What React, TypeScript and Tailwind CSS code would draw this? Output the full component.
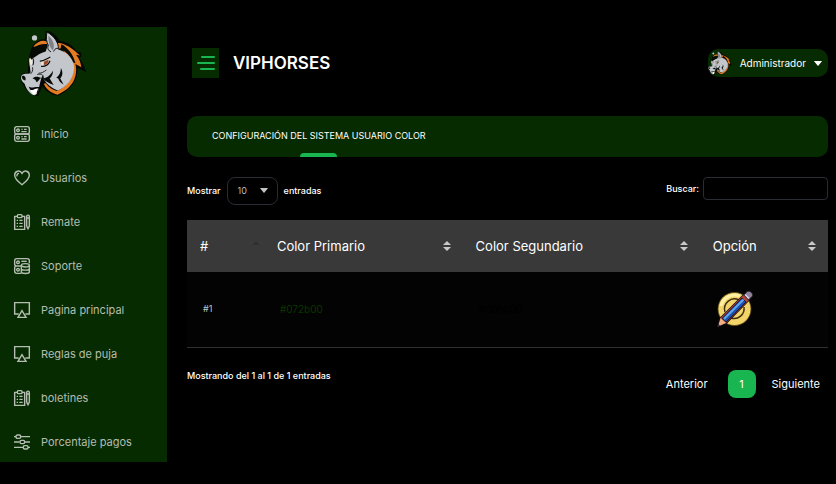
import { useState } from "react"
import type { ReactNode } from "react"

const menu = [
    { label: "Inicio", icon: "server" },
    { label: "Usuarios", icon: "heart" },
    { label: "Remate", icon: "clipboard" },
    { label: "Soporte", icon: "database" },
    { label: "Pagina principal", icon: "screen" },
    { label: "Reglas de puja", icon: "screen" },
    { label: "boletines", icon: "clipboard" },
    { label: "Porcentaje pagos", icon: "sliders" },
]

const icons: Record<string, ReactNode> = {
    server: (
        <>
            <rect x="1" y="1" width="22" height="11" rx="3" />
            <rect x="1" y="12" width="22" height="11" rx="3" />
            <circle cx="6" cy="6.5" r="2" />
            <circle cx="6" cy="17.5" r="2" />
            <path d="M11 5h2M15 5h4M11 8.500h8M11 16h2M15 16h4M11 19.500h8" />
        </>
    ),
    heart: (
        <>
            <path d="M12 22C8 19 1 14 1 8c0-7 8-8.500 11-3 3-5.500 11-4 11 3 0 6-7 11-11 14z" />
            <path d="M4.500 9.500C4 7 5.500 5 7.500 5" />
        </>
    ),
    clipboard: (
        <>
            <path d="M5 3.500H1V23h15V3.500h-4" />
            <rect x="5" y="1" width="7" height="4.500" rx="1.500" />
            <path d="M4 9.500h2M8 9.500h5M4 14h2M8 14h5M4 18.500h2M8 18.500h5" />
            <path d="M19 4c0-3 4-3 4 0v14l-2 4-2-4zM19 6h4" />
        </>
    ),
    database: (
        <>
            <path d="M23 8V4c0-2-1-3-3-3H4C2 1 1 2 1 4v5c0 2 1 3 3 3h7M4 12c-2 0-3 1-3 3v5c0 2 1 3 3 3h7" />
            <circle cx="6" cy="6.500" r="2" />
            <circle cx="6" cy="17.500" r="2" />
            <path d="M11 5h8" />
            <ellipse cx="17" cy="11" rx="6" ry="2.500" />
            <path d="M11 11v10c0 3 12 3 12 0V11M11 16c0 3 12 3 12 0" />
        </>
    ),
    screen: <path d="M7 18H1V1h22v17h-6M12 13l6 10H6z" />,
    sliders: (
        <>
            <path d="M0 4h3M10 4h14M0 12h8M16 12h8M0 20h14M21 20h3" />
            <rect x="3" y="1.500" width="7" height="5" rx="2" />
            <rect x="9" y="9.500" width="7" height="5" rx="2" />
            <rect x="14" y="17.500" width="7" height="5" rx="2" />
        </>
    ),
}

function MenuIcon({ name }: { name: string }) {
    return (
        <svg viewBox="0 0 24 24" className="size-4 shrink-0 overflow-visible" fill="none" stroke="currentColor" strokeWidth="2.100" aria-hidden="true">
            {icons[name]}
        </svg>
    )
}

function Horse({ className }: { className: string }) {
    return (
        <svg viewBox="26 18 200 200" className={className} role="img" aria-label="VIPHORSES">
            {/* outline and mane */}
            <path d="M60 72C70 52 84 42 102 42L104 18L112 17C132 26 142 40 146 48C164 50 182 56 198 80L212 84L212 96L206 98C214 112 222 124 226 142L200 130C202 162 186 194 140 215C120 210 104 200 94 186L80 216L58 208C44 198 34 180 28 164C26 148 38 144 50 146L52 102Z" fill="#050805" />
            <path d="M66 66C82 44 104 44 112 54L146 54C172 60 188 74 208 92L196 90C206 102 210 114 212 128L194 118C202 154 188 190 140 211C120 206 106 196 98 178L104 176C114 190 126 196 138 200C176 184 192 150 184 112L152 72L92 64Z" fill="#e57c22" />
            <path d="M112 58C92 56 80 60 66 70C60 78 58 88 58 98L74 88L72 96L94 84L114 80Z" fill="#070b06" />
            <path d="M152 58C172 70 188 90 194 116L184 112C178 92 166 80 148 74Z" fill="#070b06" />
            {/* head and neck */}
            <path d="M66 100C78 92 88 84 104 80L110 62C105 48 103 36 108 21C130 34 144 54 142 74C170 82 190 104 190 130C188 162 168 188 140 198C122 192 108 180 98 164L94 152C88 166 86 180 82 196C80 208 74 214 66 212C54 208 44 192 40 178C28 168 26 156 34 150C46 144 50 152 58 144L56 126C52 116 58 106 66 100Z" fill="#c3c6cb" />
            <path d="M112 32C128 48 132 62 126 76C116 70 112 56 112 32Z" fill="#7d8288" />
            <path d="M108 21C104 38 106 50 112 62C108 70 112 78 120 81M108 21C130 34 144 54 142 72C136 68 130 74 128 80" fill="none" stroke="#080b08" strokeWidth="3" />
            {/* eyes */}
            <path d="M90 112C100 112 108 106 116 102C114 114 106 122 92 123Z" fill="#f4e7d4" />
            <path d="M98 111L113 104C112 116 106 121 98 121Z" fill="#9a4a2c" />
            <path d="M86 109C98 110 108 102 118 97M90 125C104 126 113 119 117 108" fill="none" stroke="#080b08" strokeWidth="3.500" />
            <path d="M56 98C64 106 65 114 60 123C53 116 52 106 56 98Z" fill="#f3ead8" />
            <path d="M62 96C68 104 69 112 65 122" fill="none" stroke="#080b08" strokeWidth="3" />
            {/* muzzle */}
            <path d="M106 136C98 142 92 146 82 146M78 150C92 146 100 152 96 164M64 128C66 138 62 144 58 148" fill="none" stroke="#080b08" strokeWidth="2.500" />
            <path d="M64 162C70 154 84 156 90 161C84 162 84 170 76 173C74 167 71 164 64 162Z" fill="#080b08" />
            <path d="M32 155C38 150 46 158 42 168C36 167 31 163 32 155Z" fill="#080b08" />
            <path d="M52 186C62 193 70 186 84 188L80 206L62 207Z" fill="#080b08" />
            <path d="M56 196C66 200 70 191 81 192L76 207C68 215 60 208 56 196Z" fill="#fff" />
            {/* neck shading */}
            <path d="M96 162C110 160 120 150 126 138C126 150 122 156 116 162L128 182C114 176 104 172 96 162Z" fill="#080b08" />
            <path d="M136 160C146 152 150 142 150 130C158 146 154 154 148 162L158 180C150 176 144 170 142 162Z" fill="#080b08" />
            <circle cx="70" cy="39" r="8" fill="#c3c6cb" />
        </svg>
    )
}

function EditIcon() {
    return (
        <svg viewBox="0 0 38 38" className="size-[38px]" aria-hidden="true">
            <circle cx="18.500" cy="19" r="16.500" fill="#f3d468" stroke="#5b4a14" strokeWidth="0.800" />
            <path d="M5 16A14 14 0 0 1 24 6" fill="none" stroke="#fff0a8" strokeWidth="3" />
            <path d="M9 22A10 10 0 0 1 23 10M28 17A10 10 0 0 1 15 28" fill="none" stroke="#3a2e0c" strokeWidth="1.400" />
            <path d="M28 3.500L34.500 9.500L10 34.500L1 37L3 28.500Z" fill="#180d17" />
            <path d="M27.500 5L33 10L9.500 33.500L4 28.500Z" fill="#b04438" />
            <path d="M26 8L30 12L10 32L6 28.500Z" fill="#1c50ae" stroke="#180d17" strokeWidth="0.800" />
            <path d="M27.500 9.500L8 29" stroke="#5fa8f0" strokeWidth="2" />
            <path d="M4.500 28L10 33L2 36.500Z" fill="#f2ae83" />
            <path d="M2.500 34L4 35.500L1 37Z" fill="#29232c" />
            <path d="M28 5L31 1.500C34 0 38 4 36 6.500L32.500 10Z" fill="#91849d" stroke="#29222e" strokeWidth="1" />
            <path d="M29 4.500L33 8.500" stroke="#ddd5e8" strokeWidth="1.500" />
        </svg>
    )
}

function SortIcon({ className, ascending }: { className: string; ascending?: boolean }) {
    return (
        <svg viewBox="0 0 8 10" className={className} fill="currentColor" aria-hidden="true">
            <path d={ascending ? "M4 0L8 4H0z" : "M4 0L8 4H0zM4 10L8 6H0z"} />
        </svg>
    )
}

function Caret({ className }: { className: string }) {
    return (
        <svg viewBox="0 0 8 5" className={className} fill="currentColor" aria-hidden="true">
            <path d="M.5 0h7Q8 0 7.700.5L4.500 4.500Q4 5 3.500 4.500L.3.5Q0 0 .5 0z" />
        </svg>
    )
}

export default function App() {
    const [search, setSearch] = useState("")
    const [perPage, setPerPage] = useState("10")
    const [open, setOpen] = useState(true)

    const rows = [{ id: 1, primary: "#072b00", secondary: "#000000" }]
    const visible = rows.filter((r) => (r.primary + r.secondary).includes(search))

    return (
        <div className="flex min-h-screen items-start bg-black pt-[27px] font-['Inter',sans-serif] text-[10px] leading-4 text-white">
            {open && (
                <aside className="w-[167px] shrink-0 bg-[#072b00] pb-2">
                    <a href="#" className="block h-[95px] pt-1 pl-5">
                        <Horse className="size-[66px]" />
                    </a>
                    <nav className="flex flex-col gap-5 pl-3.5">
                        {menu.map((item) => (
                            <a key={item.label} href="#" className="flex h-6 items-center gap-[11px] text-[11px] text-[#b4bdb1]">
                                <MenuIcon name={item.icon} />
                                {item.label}
                            </a>
                        ))}
                    </nav>
                </aside>
            )}

            <main className="min-w-0 flex-1 pt-[21px] pr-2 pl-5">
                <header className="flex items-center justify-between pl-[5px]">
                    <div className="flex items-center gap-3.5">
                        <button type="button" aria-label="Menu" onClick={() => setOpen(!open)} className="flex h-[30px] w-[27px] items-center justify-center bg-[#072b00]">
                            <svg viewBox="0 0 18 16" className="h-4 w-[18px]" stroke="#19b550" strokeWidth="2" strokeLinecap="round" aria-hidden="true">
                                <path d="M5 2h12M1 8h16M4 14h13" />
                            </svg>
                        </button>
                        <h1 className="text-[17px] leading-6 font-semibold">VIPHORSES</h1>
                    </div>
                    <button type="button" className="flex h-7 items-center rounded-[10px] bg-[#072b00] pr-1.5">
                        <Horse className="size-6" />
                        <span className="mx-2">Administrador</span>
                        <Caret className="h-[5px] w-2" />
                    </button>
                </header>

                <section className="mt-[38px] flex rounded-[10px] bg-[#072b00] pl-[25px]">
                    <div className="flex h-[41px] flex-col items-center justify-between pt-3">
                        <h2 className="text-[9px] leading-4">CONFIGURACIÓN DEL SISTEMA USUARIO COLOR</h2>
                        <span className="h-1 w-[37px] rounded-t-sm bg-[#19b550]" />
                    </div>
                </section>

                <div className="mt-5 flex items-start justify-between text-[9px] font-medium">
                    <label className="flex items-center gap-1.5">
                        Mostrar
                        <span className="relative">
                            <select value={perPage} onChange={(e) => setPerPage(e.target.value)} className="block h-7 w-[51px] appearance-none rounded-lg border border-[#292c33] bg-black pl-2.5 font-normal text-[#bbbbbb]">
                                <option>10</option>
                                <option>25</option>
                                <option>50</option>
                            </select>
                            <Caret className="pointer-events-none absolute top-[11px] right-2.5 h-[5px] w-2 text-[#c4c4c4]" />
                        </span>
                        entradas
                    </label>
                    <label className="flex items-center gap-1">
                        Buscar:
                        <input value={search} onChange={(e) => setSearch(e.target.value)} className="h-[23px] w-[125px] rounded border border-[#292c33] bg-black px-2" />
                    </label>
                </div>

                <table className="mt-[15px] w-full table-fixed border-collapse text-left">
                    <colgroup>
                        <col className="w-[12%]" />
                        <col className="w-[31%]" />
                        <col className="w-[37%]" />
                        <col className="w-[20%]" />
                    </colgroup>
                    <thead className="bg-[#393939] text-[13px]">
                        <tr className="h-[52px]">
                            {["#", "Color Primario", "Color Segundario", "Opción"].map((title, i) => (
                                <th key={title} className={i === 0 ? "pr-1 pl-[13px] font-normal" : "pr-3 pl-[13px] font-normal"}>
                                    <span className="flex items-center justify-between">
                                        {title}
                                        <SortIcon ascending={i === 0} className={i === 0 ? "h-2.5 w-2 text-[#303030]" : "h-2.5 w-2 text-[#c9c9c9]"} />
                                    </span>
                                </th>
                            ))}
                        </tr>
                    </thead>
                    <tbody>
                        {visible.map((row) => (
                            <tr key={row.id} className="h-[75px] border-b border-[#303030] bg-[#030303]">
                                <td className="px-4 text-[9px] text-[#c4c4c4]">#{row.id}</td>
                                <td className="px-4 text-[#0a3500]">{row.primary}</td>
                                <td className="px-4 text-black">{row.secondary}</td>
                                <td className="px-4">
                                    <button type="button" aria-label="Editar" className="block">
                                        <EditIcon />
                                    </button>
                                </td>
                            </tr>
                        ))}
                    </tbody>
                </table>

                <footer className="mt-[22px] flex items-start justify-between">
                    <p className="text-[9px] leading-3 font-medium">Mostrando del 1 al 1 de 1 entradas</p>
                    <nav className="flex items-center pr-2 text-[11px]" aria-label="Paginas">
                        <button type="button">Anterior</button>
                        <button type="button" className="mr-4 ml-5 h-7 w-7 rounded-lg bg-[#19b550]">1</button>
                        <button type="button">Siguiente</button>
                    </nav>
                </footer>
            </main>
        </div>
    )
}
